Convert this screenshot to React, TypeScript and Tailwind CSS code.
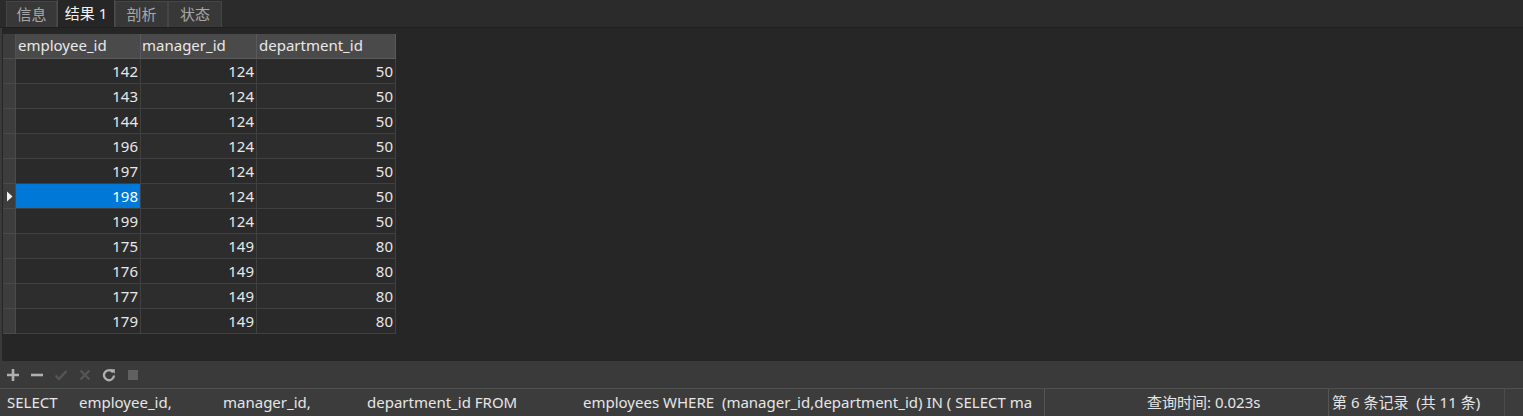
import React from 'react';

type Row = [number, number, number];

const rows: Row[] = [
  [142, 124, 50],
  [143, 124, 50],
  [144, 124, 50],
  [196, 124, 50],
  [197, 124, 50],
  [198, 124, 50],
  [199, 124, 50],
  [175, 149, 80],
  [176, 149, 80],
  [177, 149, 80],
  [179, 149, 80],
];

const selectedRow = 5;

const font = { fontFamily: '"Noto Sans", "Noto Sans CJK SC", sans-serif' };

const Tab: React.FC<{ label: string; width: string; active?: boolean }> = ({ label, width, active }) => (
  <div
    className={`flex items-center justify-center border border-b-0 text-[15px] ${width} ${
      active
        ? 'bg-[#262626] border-[#4a4a4a] text-[#f2f2f2] -mt-[2px] h-[29px]'
        : 'bg-[#383838] border-[#454545] text-[#a8a8a8] mt-[1px] h-[26px]'
    }`}
  >
    {label}
  </div>
);

const PlusIcon = () => (
  <svg width="14" height="14" viewBox="0 0 14 14">
    <path d="M7 1v12M1 7h12" stroke="#b0b0b0" strokeWidth="2.6" />
  </svg>
);
const MinusIcon = () => (
  <svg width="14" height="14" viewBox="0 0 14 14">
    <path d="M1 7h12" stroke="#b0b0b0" strokeWidth="2.6" />
  </svg>
);
const CheckIcon = () => (
  <svg width="14" height="14" viewBox="0 0 14 14">
    <path d="M1.5 7.5l3.5 3.5 7.5-8" stroke="#555" strokeWidth="2.4" fill="none" />
  </svg>
);
const CrossIcon = () => (
  <svg width="14" height="14" viewBox="0 0 14 14">
    <path d="M2.5 2.5l9 9M11.5 2.5l-9 9" stroke="#555" strokeWidth="2.4" />
  </svg>
);
const RefreshIcon = () => (
  <svg width="14" height="14" viewBox="0 0 14 14">
    <path d="M11 4.2A5 5 0 1 0 12 7.5" stroke="#b0b0b0" strokeWidth="2.3" fill="none" />
    <path d="M8.2 1.2h4.6v4.6z" fill="#b0b0b0" />
  </svg>
);
const StopIcon = () => (
  <svg width="14" height="14" viewBox="0 0 14 14">
    <rect x="2" y="2" width="10" height="10" fill="#606060" />
  </svg>
);

export default function App() {
  return (
    <div className="w-[1523px] h-[416px] bg-[#2b2b2b] flex flex-col overflow-hidden select-none" style={font}>
      {/* tabs */}
      <div className="h-[28px] flex items-end pl-[6px] border-b border-[#1f1f1f]">
        <div className="flex items-end h-[26px]">
          <Tab label="信息" width="w-[51px]" />
          <Tab label="结果 1" width="w-[58px]" active />
          <Tab label="剖析" width="w-[53px]" />
          <Tab label="状态" width="w-[54px]" />
        </div>
      </div>

      {/* grid area */}
      <div className="h-[333px] bg-[#262626] border-l-[2px] border-[#3a3a3a] pt-[6px] pl-[1px]">
        <div className="flex flex-col w-[393px] text-[15px] text-[#e8e8e8]">
          <div className="flex h-[25px] bg-[#4a4a4a]">
            <div className="w-[13px] bg-[#3d3d3d] border-r border-b border-[#505050]" />
            <div className="w-[125px] border-r border-b border-[#5a5a5a] px-[2px] leading-[23px]">employee_id</div>
            <div className="w-[116px] border-r border-b border-[#5a5a5a] px-[1px] leading-[23px]">manager_id</div>
            <div className="w-[139px] border-r border-b border-[#5a5a5a] px-[2px] leading-[23px]">department_id</div>
          </div>
          {rows.map((r, i) => {
            const sel = i === selectedRow;
            const bg = i % 2 === 0 ? 'bg-[#2a2a2a]' : 'bg-[#2d2d2d]';
            return (
              <div key={i} className={`flex h-[25px] ${bg}`}>
                <div className="w-[13px] bg-[#3d3d3d] border-r border-b border-[#4a4a4a] flex items-center justify-center">
                  {sel && (
                    <svg width="7" height="11" viewBox="0 0 7 11">
                      <path d="M1 0.5l5.5 5-5.5 5z" fill="#f0f0f0" />
                    </svg>
                  )}
                </div>
                <div
                  className={`w-[125px] border-r border-b border-[#404040] text-right pr-[2px] leading-[24px] ${
                    sel ? 'bg-[#0078d7] text-white' : ''
                  }`}
                >
                  {r[0]}
                </div>
                <div className="w-[116px] border-r border-b border-[#404040] text-right pr-[2px] leading-[24px]">{r[1]}</div>
                <div className="w-[139px] border-r border-b border-[#404040] text-right pr-[2px] leading-[24px]">{r[2]}</div>
              </div>
            );
          })}
        </div>
      </div>

      {/* toolbar */}
      <div className="h-[27px] bg-[#3a3a3a] flex items-center pl-[6px] gap-[10px]">
        <PlusIcon />
        <MinusIcon />
        <CheckIcon />
        <CrossIcon />
        <RefreshIcon />
        <StopIcon />
      </div>

      {/* status bar */}
      <div className="flex-1 bg-[#3c3c3c] border-t border-[#4f4f4f] flex items-center text-[15px] text-[#e6e6e6] whitespace-pre">
        <div className="w-[1044px] h-full pl-[7px] flex items-center overflow-hidden">
          <span className="w-[72px] shrink-0">SELECT</span>
          <span className="w-[144px] shrink-0">employee_id,</span>
          <span className="w-[144px] shrink-0">manager_id,</span>
          <span className="w-[216px] shrink-0">department_id FROM</span>
          <span className="shrink-0">employees WHERE  (manager_id,department_id) IN ( SELECT ma</span>
        </div>
        <div className="h-full border-l border-[#555] w-[284px] pl-[102px] flex items-center">查询时间: 0.023s</div>
        <div className="h-full border-l border-[#555] w-[176px] pl-[3px] flex items-center">第 6 条记录  (共 11 条)</div>
        <div className="h-full border-l border-[#4a4a4a] flex-1" />
      </div>
    </div>
  );
}
